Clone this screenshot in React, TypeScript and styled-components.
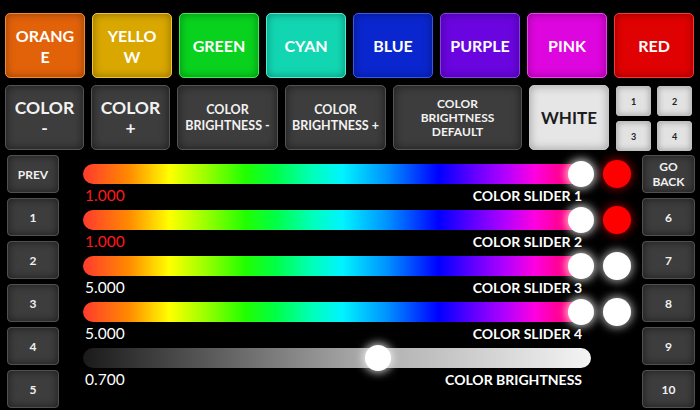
import React from 'react';
import styled, { createGlobalStyle } from 'styled-components';

const GlobalStyle = createGlobalStyle`
  html, body {
    margin: 0;
    padding: 0;
    background: #000;
  }
  body {
    font-family: Lato, "Open Sans", sans-serif;
    color: #fff;
  }
`;

// палитра цветных кнопок: заливка и светлая кайма
const swatches = [
  { label: 'ORANGE', fill: '#e2620a', edge: '#f08a3a' },
  { label: 'YELLOW', fill: '#d9a700', edge: '#ecc43a' },
  { label: 'GREEN', fill: '#08d21e', edge: '#40ea50' },
  { label: 'CYAN', fill: '#12d6b2', edge: '#50ecd0' },
  { label: 'BLUE', fill: '#0a26cf', edge: '#3a58ea' },
  { label: 'PURPLE', fill: '#6a05df', edge: '#8c3af0' },
  { label: 'PINK', fill: '#de06de', edge: '#f040f0' },
  { label: 'RED', fill: '#e00202', edge: '#f23a3a' },
];

const sliders = [
  { value: '1.000', valueColor: '#ff1a1a', label: 'COLOR SLIDER 1', pos: 1, dot: '#ff0000' },
  { value: '1.000', valueColor: '#ff1a1a', label: 'COLOR SLIDER 2', pos: 1, dot: '#ff0000' },
  { value: '5.000', valueColor: '#ffffff', label: 'COLOR SLIDER 3', pos: 1, dot: '#ffffff' },
  { value: '5.000', valueColor: '#ffffff', label: 'COLOR SLIDER 4', pos: 1, dot: '#ffffff' },
];

const TRACK_W = 508;
const THUMB = 26;

const thumbLeft = (pos: number) => 10 + pos * (TRACK_W - 20) - THUMB / 2;

export default function App() {
  return (
    <Page>
      <GlobalStyle />
      <SwatchRow>
        {swatches.map(s => (
          <SwatchButton key={s.label} $fill={s.fill} $edge={s.edge}>
            {s.label}
          </SwatchButton>
        ))}
      </SwatchRow>

      <ControlRow>
        <DarkButton $size={17.5} $lh={20}>COLOR<br />-</DarkButton>
        <DarkButton $size={17.5} $lh={20}>COLOR<br />+</DarkButton>
        <DarkButton $size={12.5} $lh={16}>COLOR<br />BRIGHTNESS -</DarkButton>
        <DarkButton $size={12.5} $lh={16}>COLOR<br />BRIGHTNESS +</DarkButton>
        <DarkButton $size={12} $lh={14}>COLOR<br />BRIGHTNESS<br />DEFAULT</DarkButton>
        <WhiteButton>WHITE</WhiteButton>
        <MiniGrid>
          {[1, 2, 3, 4].map(n => (
            <MiniButton key={n}>{n}</MiniButton>
          ))}
        </MiniGrid>
      </ControlRow>

      <Main>
        <SideColumn>
          <SideButton>PREV</SideButton>
          {[1, 2, 3, 4, 5].map(n => (
            <SideButton key={n}>{n}</SideButton>
          ))}
        </SideColumn>

        <SliderColumn>
          {sliders.map(s => (
            <SliderBlock key={s.label}>
              <SliderRow>
                <Track $kind="color">
                  <Thumb style={{ left: thumbLeft(s.pos) }} />
                </Track>
                <Dot $color={s.dot} />
              </SliderRow>
              <LabelRow>
                <Value $color={s.valueColor}>{s.value}</Value>
                <Caption>{s.label}</Caption>
              </LabelRow>
            </SliderBlock>
          ))}
          <SliderBlock>
            <SliderRow>
              <Track $kind="gray">
                <Thumb style={{ left: thumbLeft(0.585) }} />
              </Track>
            </SliderRow>
            <LabelRow>
              <Value $color="#ffffff">0.700</Value>
              <Caption>COLOR BRIGHTNESS</Caption>
            </LabelRow>
          </SliderBlock>
        </SliderColumn>

        <SideColumn>
          <SideButton>GO<br />BACK</SideButton>
          {[6, 7, 8, 9, 10].map(n => (
            <SideButton key={n}>{n}</SideButton>
          ))}
        </SideColumn>
      </Main>
    </Page>
  );
}

// Стили
const Page = styled.div`
  width: 700px;
  height: 410px;
  box-sizing: border-box;
  padding: 13px 0 0 5px;
  overflow: hidden;
`;

const SwatchRow = styled.div`
  display: flex;
  gap: 7px;
`;

const BaseButton = styled.div`
  box-sizing: border-box;
  display: flex;
  align-items: center;
  justify-content: center;
  text-align: center;
  font-weight: 700;
  border-radius: 5px;
`;

const SwatchButton = styled(BaseButton)<{ $fill: string; $edge: string }>`
  width: 80px;
  height: 65px;
  padding: 0 9px;
  font-size: 16px;
  line-height: 21px;
  word-break: break-all;
  color: #fff;
  background: ${p => p.$fill};
  border: 1px solid ${p => p.$edge};
  box-shadow: inset 0 0 9px rgba(0, 0, 0, 0.35);
`;

const ControlRow = styled.div`
  display: grid;
  grid-template-columns: 79px 79px 101px 101px 129px 80px 77px;
  grid-template-rows: 65px;
  gap: 7px;
  margin-top: 7px;
`;

const DarkButton = styled(BaseButton)<{ $size: number; $lh: number }>`
  font-size: ${p => p.$size}px;
  line-height: ${p => p.$lh}px;
  color: #f2f2f2;
  background: #3d3d3d;
  border: 1px solid #545454;
  box-shadow: inset 0 0 10px rgba(0, 0, 0, 0.55);
`;

const WhiteButton = styled(BaseButton)`
  font-size: 17px;
  color: #1c1c1c;
  background: #e6e6e6;
  border: 1px solid #c4c4c4;
  box-shadow: inset 0 0 10px rgba(0, 0, 0, 0.3);
`;

const MiniGrid = styled.div`
  display: grid;
  grid-template-columns: 35px 35px;
  grid-template-rows: 30px 30px;
  column-gap: 6px;
  row-gap: 5px;
  padding-top: 1px;
`;

const MiniButton = styled(BaseButton)`
  font-size: 9px;
  color: #222;
  background: #e2e2e2;
  border: 1px solid #c0c0c0;
  border-radius: 3px;
  box-shadow: inset 0 0 6px rgba(0, 0, 0, 0.3);
`;

const Main = styled.div`
  display: grid;
  grid-template-columns: 52px 1fr 53px;
  margin-top: 5px;
  padding: 0 5px 0 2px;
`;

const SideColumn = styled.div`
  display: flex;
  flex-direction: column;
  gap: 5px;
`;

const SideButton = styled(BaseButton)`
  height: 38px;
  font-size: 12px;
  line-height: 15px;
  color: #f0f0f0;
  background: #3d3d3d;
  border: 1px solid #505050;
  border-radius: 4px;
  box-shadow: inset 0 0 8px rgba(0, 0, 0, 0.55);
`;

const SliderColumn = styled.div`
  display: flex;
  flex-direction: column;
  padding: 9px 0 0 24px;
`;

const SliderBlock = styled.div`
  display: flex;
  flex-direction: column;
`;

const SliderRow = styled.div`
  display: flex;
  align-items: center;
  height: 20px;
`;

const colorTrack = `linear-gradient(to right,
  #ff3a2e 0%, #ff8a00 9%, #ffff00 17%, #9cff00 24%, #20ff00 32%,
  #00ff48 38%, #00ffb8 45%, #00f4ff 51%, #0090ff 60%, #0000ff 70%,
  #7000ff 78%, #b000ff 83%, #ff00e0 89%, #ff0090 94%, #ff2040 100%)`;

const grayTrack = `linear-gradient(to right, #1a1a1a 0%, #5a5a5a 25%, #aaaaaa 55%, #f4f4f4 100%)`;

const Track = styled.div<{ $kind: 'color' | 'gray' }>`
  position: relative;
  flex: 0 0 ${TRACK_W}px;
  height: 20px;
  border-radius: 10px;
  background: ${p => (p.$kind === 'color' ? colorTrack : grayTrack)};
`;

const Thumb = styled.div`
  position: absolute;
  top: -3px;
  width: ${THUMB}px;
  height: ${THUMB}px;
  border-radius: 50%;
  background: #fff;
  box-shadow: 0 0 8px 2px rgba(255, 255, 255, 0.75);
`;

const Dot = styled.div<{ $color: string }>`
  width: 28px;
  height: 28px;
  margin-left: 12px;
  border-radius: 50%;
  background: ${p => p.$color};
  box-shadow: 0 0 8px 2px ${p => (p.$color === '#ffffff' ? 'rgba(255,255,255,0.6)' : 'rgba(255,0,0,0.45)')};
`;

const LabelRow = styled.div`
  display: flex;
  align-items: center;
  justify-content: space-between;
  width: ${TRACK_W}px;
  box-sizing: border-box;
  height: 26px;
  padding: 0 9px 4px 2px;
`;

const Value = styled.span<{ $color: string }>`
  font-size: 15.5px;
  color: ${p => p.$color};
`;

const Caption = styled.span`
  font-size: 14px;
  font-weight: 700;
  color: #fff;
`;
